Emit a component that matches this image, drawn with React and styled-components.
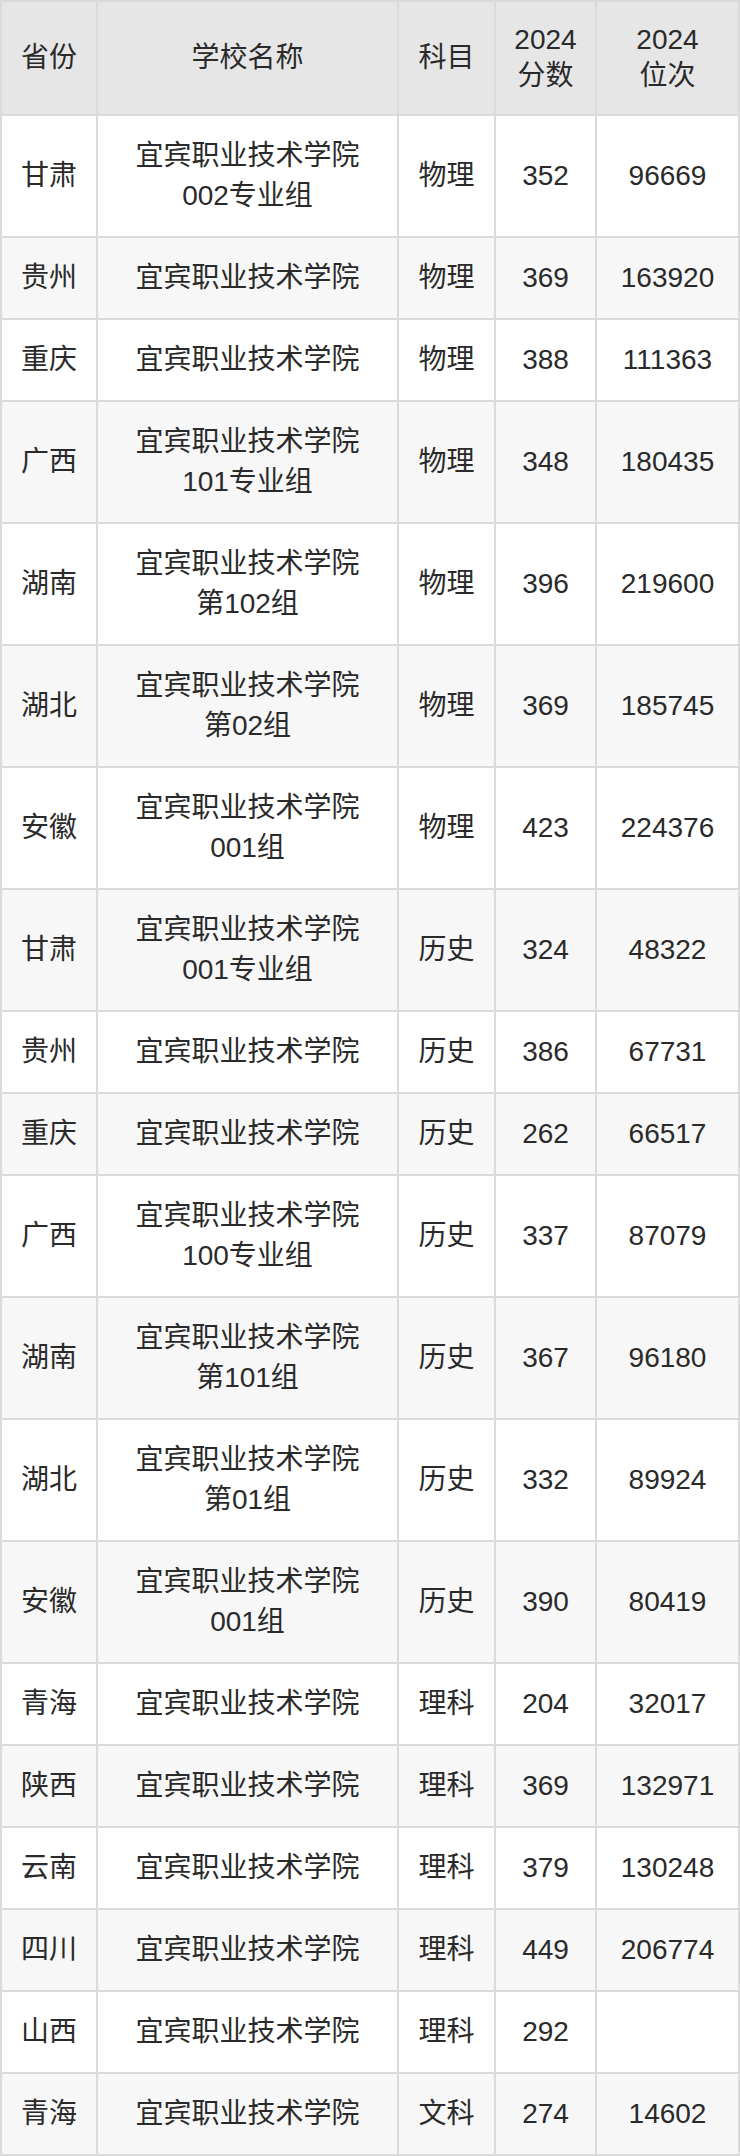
import React from "react";
import styled, { createGlobalStyle } from "styled-components";

const GlobalStyle = createGlobalStyle`
  html, body {
    margin: 0;
    padding: 0;
    background: #ffffff;
  }
  body {
    font-family: "Liberation Sans", "Noto Sans CJK SC", sans-serif;
    color: #2a2a2a;
  }
`;

const COLUMNS = "94px 299px 95px 99px 141px";

const Table = styled.div`
  width: 740px;
  box-sizing: border-box;
  display: grid;
  row-gap: 2px;
  padding: 2px;
  background: #dadada;
`;

const Row = styled.div`
  display: grid;
  grid-template-columns: ${COLUMNS};
  column-gap: 2px;
`;

const Cell = styled.div`
  display: flex;
  flex-direction: column;
  align-items: center;
  justify-content: center;
  text-align: center;
  font-size: 28px;
  line-height: ${(p) => (p.$head ? "36px" : "40px")};
  padding: 20px 6px;
  min-height: ${(p) => (p.$head ? "72px" : "40px")};
  background: ${(p) => (p.$head ? "#e6e6e6" : p.$alt ? "#f7f7f7" : "#ffffff")};
  color: #2a2a2a;
`;

const Line = styled.span`
  display: block;
  white-space: nowrap;
`;

const rows = [
  ["甘肃", ["宜宾职业技术学院", "002专业组"], "物理", "352", "96669"],
  ["贵州", ["宜宾职业技术学院"], "物理", "369", "163920"],
  ["重庆", ["宜宾职业技术学院"], "物理", "388", "111363"],
  ["广西", ["宜宾职业技术学院", "101专业组"], "物理", "348", "180435"],
  ["湖南", ["宜宾职业技术学院", "第102组"], "物理", "396", "219600"],
  ["湖北", ["宜宾职业技术学院", "第02组"], "物理", "369", "185745"],
  ["安徽", ["宜宾职业技术学院", "001组"], "物理", "423", "224376"],
  ["甘肃", ["宜宾职业技术学院", "001专业组"], "历史", "324", "48322"],
  ["贵州", ["宜宾职业技术学院"], "历史", "386", "67731"],
  ["重庆", ["宜宾职业技术学院"], "历史", "262", "66517"],
  ["广西", ["宜宾职业技术学院", "100专业组"], "历史", "337", "87079"],
  ["湖南", ["宜宾职业技术学院", "第101组"], "历史", "367", "96180"],
  ["湖北", ["宜宾职业技术学院", "第01组"], "历史", "332", "89924"],
  ["安徽", ["宜宾职业技术学院", "001组"], "历史", "390", "80419"],
  ["青海", ["宜宾职业技术学院"], "理科", "204", "32017"],
  ["陕西", ["宜宾职业技术学院"], "理科", "369", "132971"],
  ["云南", ["宜宾职业技术学院"], "理科", "379", "130248"],
  ["四川", ["宜宾职业技术学院"], "理科", "449", "206774"],
  ["山西", ["宜宾职业技术学院"], "理科", "292", ""],
  ["青海", ["宜宾职业技术学院"], "文科", "274", "14602"],
];

const headers = [["省份"], ["学校名称"], ["科目"], ["2024", "分数"], ["2024", "位次"]];

export default function App() {
  return (
    <>
      <GlobalStyle />
      <Table>
        <Row>
          {headers.map((h, i) => (
            <Cell key={i} $head>
              {h.map((t, j) => (
                <Line key={j}>{t}</Line>
              ))}
            </Cell>
          ))}
        </Row>
        {rows.map((r, i) => {
          const alt = i % 2 === 1;
          return (
            <Row key={i}>
              <Cell $alt={alt}>{r[0]}</Cell>
              <Cell $alt={alt}>
                {r[1].map((t, j) => (
                  <Line key={j}>{t}</Line>
                ))}
              </Cell>
              <Cell $alt={alt}>{r[2]}</Cell>
              <Cell $alt={alt}>{r[3]}</Cell>
              <Cell $alt={alt}>{r[4]}</Cell>
            </Row>
          );
        })}
      </Table>
    </>
  );
}
